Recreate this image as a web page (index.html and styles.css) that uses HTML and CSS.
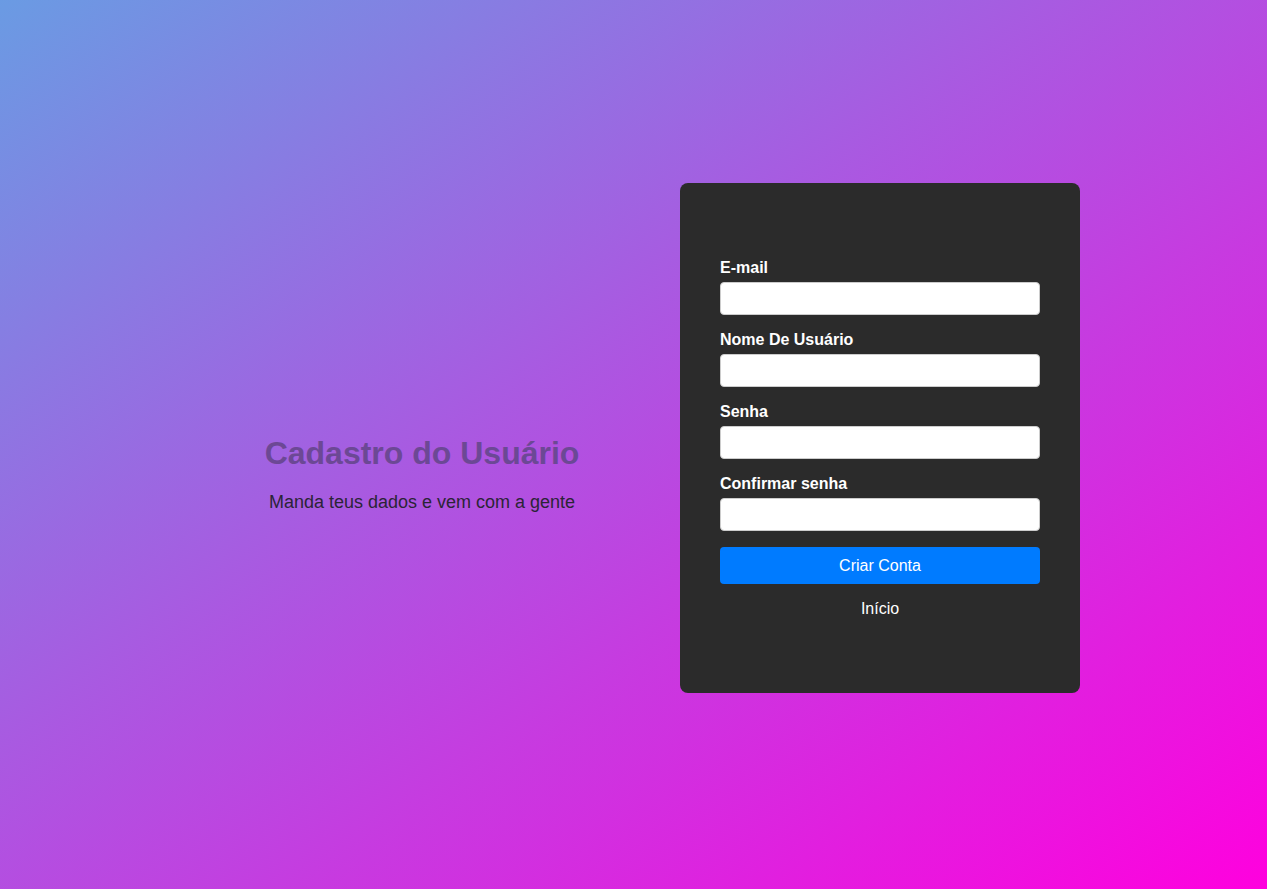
FILE: index.html
```html
<!DOCTYPE html>
<html lang="pt-BR">
<head>
<meta charset="UTF-8">
<title>Cadastro do Usuário</title>
<link rel="stylesheet" href="styles.css">
</head>
<body>
<main class="page">
  <section class="intro">
    <h1 class="intro-title">Cadastro do Usuário</h1>
    <p class="intro-text">Manda teus dados e vem com a gente</p>
  </section>
  <section class="card">
    <form class="form">
      <label class="label" for="email">E-mail</label>
      <input class="input" id="email" type="email">
      <label class="label" for="user">Nome De Usuário</label>
      <input class="input" id="user" type="text">
      <label class="label" for="pass">Senha</label>
      <input class="input" id="pass" type="password">
      <label class="label" for="pass2">Confirmar senha</label>
      <input class="input" id="pass2" type="password">
      <button class="button" type="button">Criar Conta</button>
      <a class="link" href="#">Início</a>
    </form>
  </section>
</main>
</body>
</html>
```
FILE: styles.css
```css
* { box-sizing: border-box; }
html, body { margin: 0; padding: 0; height: 100%; }
body {
  font-family: "Liberation Sans", Arial, sans-serif;
  background: linear-gradient(to bottom right, #6a9be3, #ff00de);
  min-height: 100vh;
}
.page {
  min-height: 100vh;
  display: flex;
  align-items: center;
  justify-content: center;
  padding: 0 0 13px 35px;
}
.intro {
  width: 400px;
  margin-right: 58px;
  margin-top: 72px;
  text-align: center;
}
.intro-title {
  margin: 0 0 20px;
  font-size: 32px;
  line-height: 37px;
  font-weight: bold;
  color: #6c4895;
}
.intro-text {
  margin: 0;
  font-size: 18px;
  line-height: 21px;
  color: #2b2436;
}
.card {
  width: 400px;
  background: #2b2b2b;
  border-radius: 8px;
  padding: 76px 40px 75px;
}
.form { display: flex; flex-direction: column; }
.label {
  display: block;
  color: #fff;
  font-size: 16px;
  font-weight: bold;
  line-height: 18px;
  margin-bottom: 5px;
}
.input {
  height: 33px;
  width: 100%;
  border: 1px solid #ccc;
  border-radius: 4px;
  background: #fff;
  margin: 0 0 16px;
  padding: 0 8px;
  font-size: 16px;
}
.button {
  height: 37px;
  width: 100%;
  border: none;
  border-radius: 4px;
  background: #007bff;
  color: #fff;
  font-family: inherit;
  font-size: 16px;
  cursor: pointer;
}
.link {
  margin-top: 16px;
  text-align: center;
  color: #fff;
  text-decoration: none;
  font-size: 16px;
  line-height: 18px;
}
```
